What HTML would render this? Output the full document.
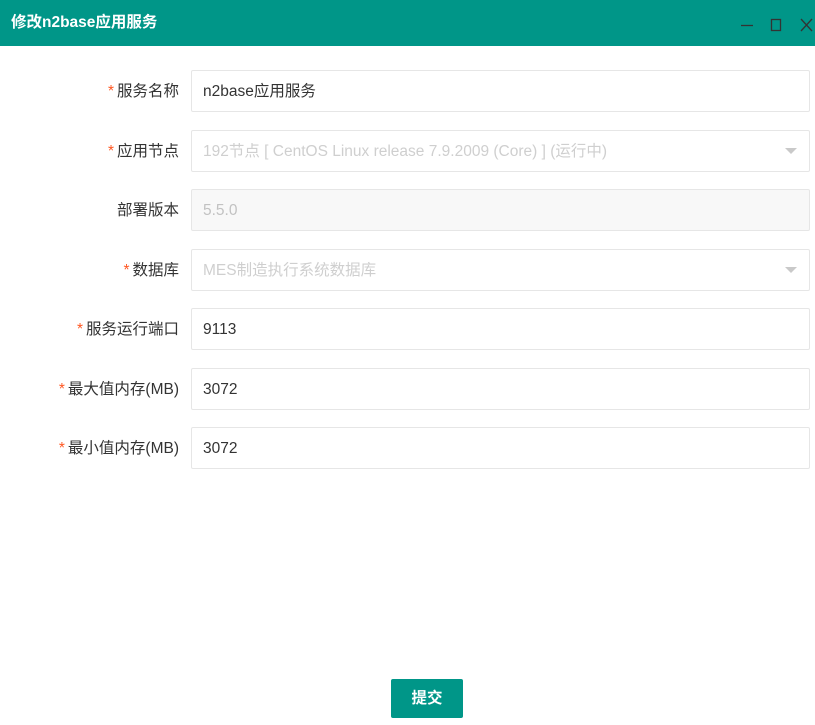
<!DOCTYPE html>
<html><head><meta charset="utf-8"><style>
*{box-sizing:border-box;margin:0;padding:0}
body{width:815px;height:725px;background:#fff;font-family:"Liberation Sans","Noto Sans CJK SC",sans-serif;position:relative;overflow:hidden}
.hd{position:absolute;left:0;top:0;width:815px;height:46px;background:#009688;color:#fff;font-size:15.5px;font-weight:bold;line-height:45px;padding-left:11px}
.ic{position:absolute;top:0}
.row{position:absolute;left:0;width:815px;height:42px}
.lb{position:absolute;right:636px;top:1px;line-height:42px;font-size:15.5px;color:#333;white-space:nowrap}
.lb i{color:#ff5722;font-style:normal;margin-right:3px}
.in{position:absolute;left:191px;width:619px;top:0;height:42px;border:1px solid #e6e6e6;border-radius:2px;line-height:42px;padding-left:11px;font-size:15.5px;color:#333;background:#fff}
.ph{color:#cfcfcf}
.dis{background:#f8f8f8;color:#c2c2c2}
.arr{position:absolute;right:12px;top:17px;width:0;height:0;border-left:6px solid transparent;border-right:6px solid transparent;border-top:6px solid #c9c9c9}
.btn{position:absolute;left:391px;top:679px;width:72px;height:39px;background:#009688;color:#fff;border-radius:2px;font-size:15.5px;font-weight:bold;line-height:39px;text-align:center}
</style></head><body>
<div class="hd">修改n2base应用服务</div>
<svg class="ic" style="left:738px" width="77" height="46">
<line x1="3" y1="25.5" x2="15" y2="25.5" stroke="#333" stroke-width="1.3"/>
<rect x="33.5" y="19.5" width="9" height="11" fill="none" stroke="#333" stroke-width="1.3"/>
<path d="M63 19L74 31M74 19L63 31" stroke="#333" stroke-width="1.3"/>
</svg>
<div class="row" style="top:70px"><div class="lb"><i>*</i>服务名称</div><div class="in">n2base应用服务</div></div>
<div class="row" style="top:130px"><div class="lb"><i>*</i>应用节点</div><div class="in ph">192节点 [ CentOS Linux release 7.9.2009 (Core) ] (运行中)<span class="arr"></span></div></div>
<div class="row" style="top:189px"><div class="lb">部署版本</div><div class="in dis">5.5.0</div></div>
<div class="row" style="top:249px"><div class="lb"><i>*</i>数据库</div><div class="in ph">MES制造执行系统数据库<span class="arr"></span></div></div>
<div class="row" style="top:308px"><div class="lb"><i>*</i>服务运行端口</div><div class="in">9113</div></div>
<div class="row" style="top:368px"><div class="lb"><i>*</i>最大值内存(MB)</div><div class="in">3072</div></div>
<div class="row" style="top:427px"><div class="lb"><i>*</i>最小值内存(MB)</div><div class="in">3072</div></div>
<div class="btn">提交</div>
</body></html>
